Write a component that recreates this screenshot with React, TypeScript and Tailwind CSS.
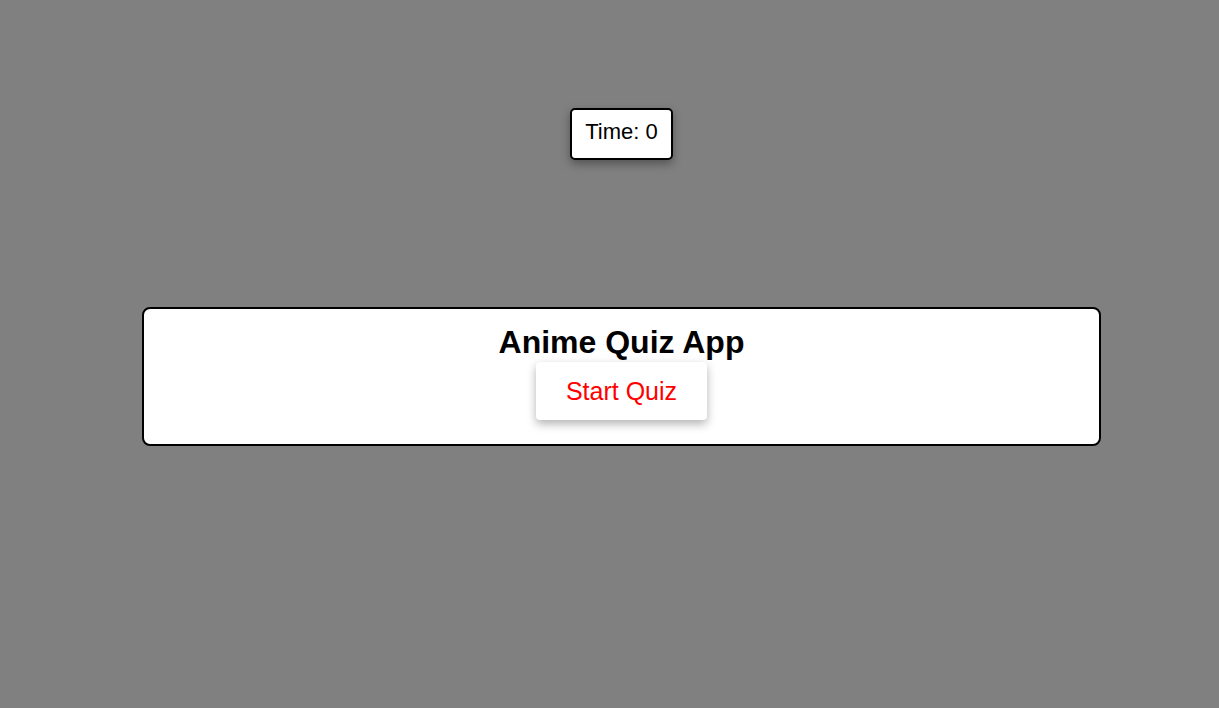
import React from 'react';

const App: React.FC = () => {
    const time = 0;

    return (
        <div className="min-h-[708px] bg-[#808080] font-['Liberation_Sans',Arial,sans-serif] text-black">
            <div className="ml-[142px] w-[959px] pt-[108px] flex flex-col items-center">
                <div className="bg-white border-2 border-black rounded-[5px] px-[13px] pt-[9px] pb-[13px] text-[22px] leading-[26px] shadow-[0_4px_10px_rgba(0,0,0,0.35)]">
                    Time: {time}
                </div>
            </div>

            <div className="ml-[142px] mt-[147px] w-[959px] h-[139px] bg-white border-2 border-black rounded-[8px] flex flex-col items-center pt-[15px]">
                <h1 className="text-[32px] leading-[37px] font-bold">Anime Quiz App</h1>
                <button className="mt-[1px] bg-white text-[#ff0000] text-[25px] leading-[29px] px-[30px] py-[14.5px] rounded-[4px] shadow-[0_4px_10px_rgba(0,0,0,0.3)]">
                    Start Quiz
                </button>
            </div>
        </div>
    );
};

export default App;
